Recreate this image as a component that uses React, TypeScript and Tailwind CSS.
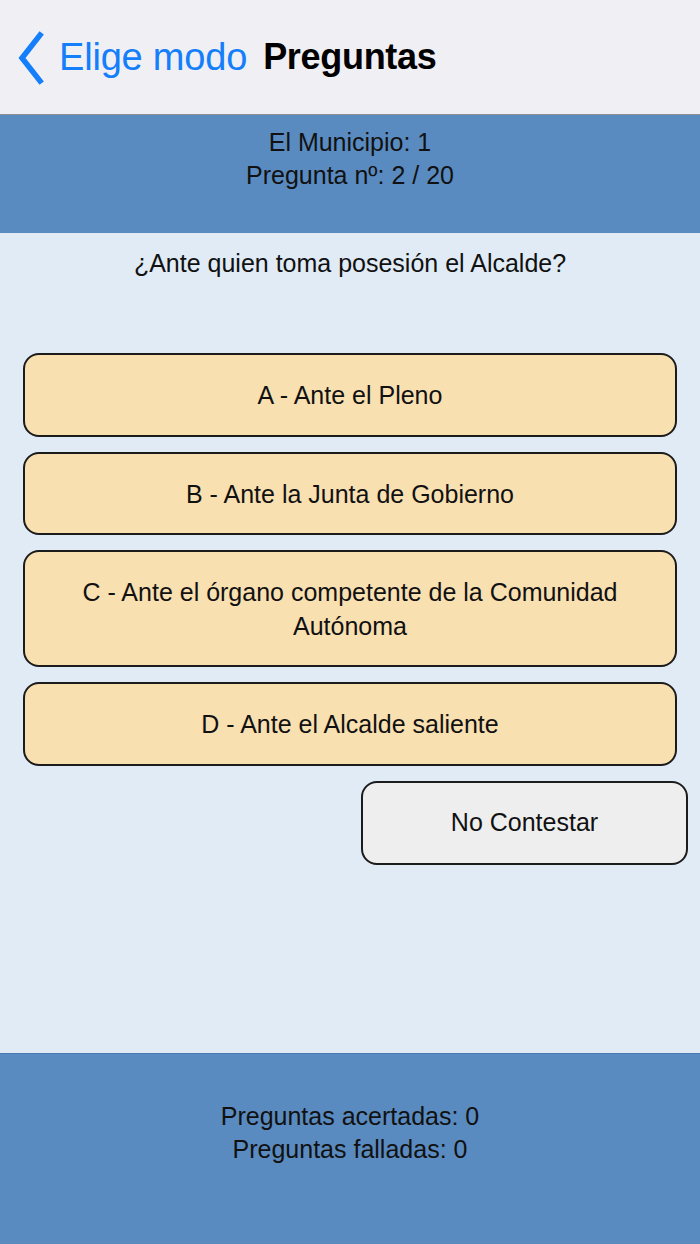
import React from "react";

const font = { fontFamily: '"Liberation Sans", Arial, sans-serif' };

function Answer({ children, h }: { children: React.ReactNode; h: string }) {
  return (
    <div
      className={`mx-[23px] ${h} flex items-center justify-center rounded-[16px] border-2 border-[#1c1c1c] bg-[#f9e0b1] px-6 text-center text-[25px] leading-[34px] text-[#111]`}
    >
      {children}
    </div>
  );
}

export default function App() {
  return (
    <div className="flex h-[1244px] w-[700px] flex-col overflow-hidden" style={font}>
      {/* nav bar */}
      <div className="flex h-[115px] shrink-0 items-center border-b border-[#8e8e93] bg-[#efeff4]">
        <svg width="30" height="54" viewBox="0 0 30 54" className="ml-[16px] mr-[13px] mt-[2px]">
          <polyline
            points="24,4 6,27 24,50"
            fill="none"
            stroke="#147efb"
            strokeWidth="5.5"
            strokeLinecap="square"
            strokeLinejoin="miter"
          />
        </svg>
        <span className="text-[38px] leading-none tracking-[-0.2px] text-[#147efb]">Elige modo</span>
        <span className="ml-[16px] text-[36px] font-bold leading-none tracking-[-0.3px] text-black">Preguntas</span>
      </div>

      {/* info header */}
      <div className="flex h-[118px] shrink-0 flex-col items-center bg-[#5a8bc0] pt-[11px] text-[25px] leading-[33px] text-[#111]">
        <div>El Municipio: 1</div>
        <div>Pregunta nº: 2 / 20</div>
      </div>

      {/* content */}
      <div className="flex flex-1 flex-col bg-[#e0ebf5] pt-[14px]">
        <div className="text-center text-[25px] leading-[33px] text-[#111]">
          ¿Ante quien toma posesión el Alcalde?
        </div>
        <div className="mt-[73px] flex flex-col gap-[15px]">
          <Answer h="h-[84px]">A - Ante el Pleno</Answer>
          <Answer h="h-[83px]">B - Ante la Junta de Gobierno</Answer>
          <Answer h="h-[117px]">C - Ante el órgano competente de la Comunidad Autónoma</Answer>
          <Answer h="h-[84px]">D - Ante el Alcalde saliente</Answer>
          <div className="flex justify-end pr-[12px]">
            <div className="flex h-[84px] w-[327px] items-center justify-center rounded-[16px] border-2 border-[#1c1c1c] bg-[#eeeeee] text-[25px] text-[#111]">
              No Contestar
            </div>
          </div>
        </div>
      </div>

      {/* footer */}
      <div className="flex h-[191px] shrink-0 flex-col items-center border-t border-[#4a7ab0] bg-[#5a8bc0] pt-[46px] text-[25px] leading-[33px] text-[#111]">
        <div>Preguntas acertadas: 0</div>
        <div>Preguntas falladas: 0</div>
      </div>
    </div>
  );
}
